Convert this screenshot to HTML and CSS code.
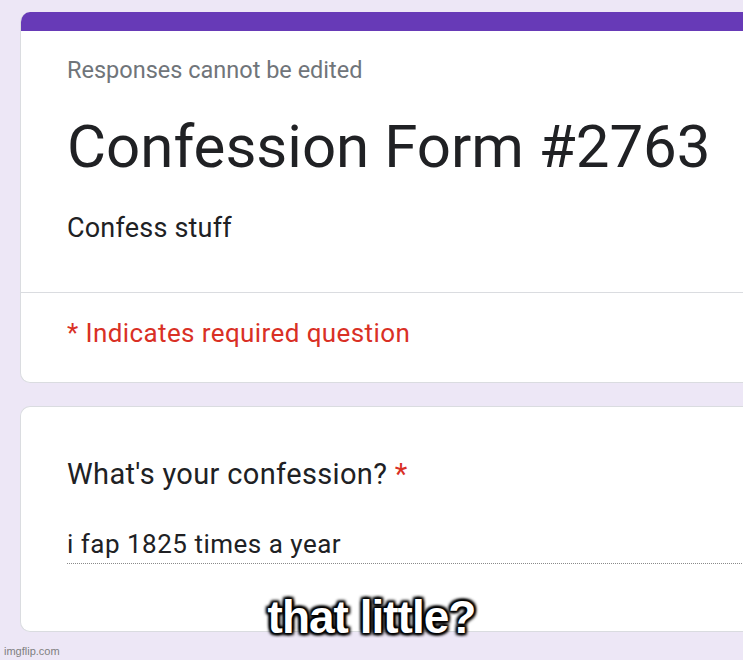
FILE: index.html
```html
<!DOCTYPE html>
<html>
<head>
<meta charset="utf-8">
<link rel="stylesheet" href="styles.css">
</head>
<body>
<div class="page">
  <div class="card header-card">
    <div class="accent"></div>
    <div class="header-main">
      <div class="note">Responses cannot be edited</div>
      <div class="title">Confession Form #2763</div>
      <div class="desc">Confess stuff</div>
    </div>
    <div class="required-row">* Indicates required question</div>
  </div>
  <div class="card question-card">
    <div class="question">What's your confession? <span class="star">*</span></div>
    <div class="answer">i fap 1825 times a year</div>
  </div>
  <div class="meme">that little?</div>
  <div class="watermark">imgflip.com</div>
</div>
</body>
</html>
```
FILE: styles.css
```css
html, body {
  margin: 0;
  padding: 0;
}
body {
  background: #ede7f6;
  font-family: Roboto, "Noto Sans", sans-serif;
  overflow: hidden;
}
.page {
  position: relative;
  width: 743px;
  height: 660px;
  overflow: hidden;
  padding: 12px 0 0 20px;
  box-sizing: border-box;
}
.card {
  width: 780px;
  background: #fff;
  border: 1px solid #dadce0;
  border-right: none;
  border-radius: 10px;
  box-sizing: border-box;
}
.header-card {
  border-top: none;
  overflow: hidden;
}
.accent {
  height: 19px;
  background: #673ab7;
}
.header-main {
  padding: 24px 0 48px 46px;
  border-bottom: 1px solid #dadce0;
}
.note {
  font-size: 23.5px;
  line-height: 30px;
  color: #70757a;
}
.title {
  margin-top: 25.5px;
  font-size: 60px;
  line-height: 72px;
  color: #202124;
}
.desc {
  margin-top: 29.5px;
  font-size: 27px;
  line-height: 32px;
  letter-spacing: 0.2px;
  color: #202124;
}
.required-row {
  padding: 24.5px 0 34.5px 46px;
  font-size: 26px;
  line-height: 30px;
  letter-spacing: 0.4px;
  color: #d93025;
}
.question-card {
  margin-top: 23px;
  padding: 49.5px 0 67px 46px;
}
.question {
  font-size: 29px;
  line-height: 34px;
  letter-spacing: 0.35px;
  color: #202124;
}
.star {
  color: #d93025;
}
.answer {
  margin-top: 38px;
  padding-bottom: 4px;
  border-bottom: 1px dotted #8a8a8a;
  font-size: 26px;
  line-height: 30px;
  color: #202124;
  letter-spacing: 0.5px;
}
.meme {
  position: absolute;
  left: 0;
  right: 0;
  top: 594px;
  text-align: center;
  font-family: "Liberation Sans", Arial, sans-serif;
  font-weight: bold;
  font-size: 46px;
  line-height: 46px;
  letter-spacing: -1px;
  color: #fff;
  text-shadow:
    0 0 2px #000, 0 0 2px #000, 0 0 3px #000, 0 0 4px #000,
    2px 2px 3px #000, -2px -2px 3px #000, 2px -2px 3px #000, -2px 2px 3px #000;
}
.watermark {
  position: absolute;
  left: 4px;
  bottom: 3px;
  font-family: "Liberation Sans", Arial, sans-serif;
  font-size: 11px;
  color: #7f7f7f;
}
```
